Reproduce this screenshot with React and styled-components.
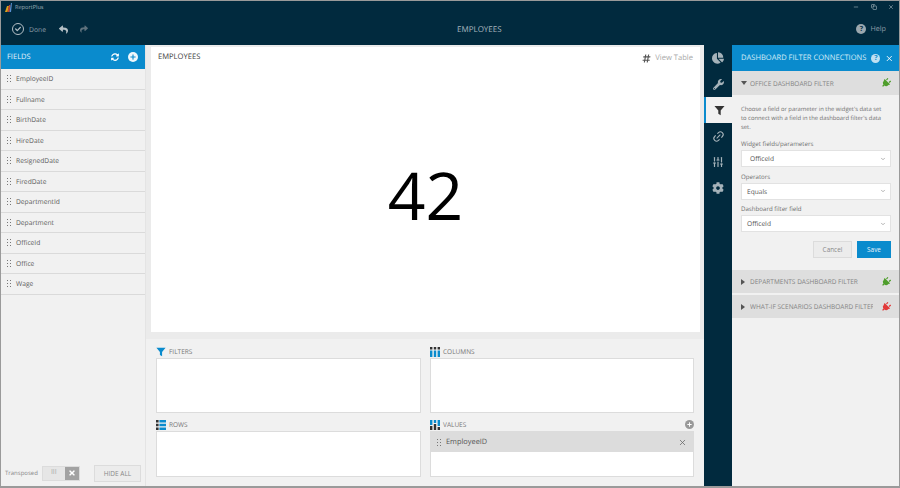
import React from "react";
import styled, { createGlobalStyle } from "styled-components";
import { FaReply, FaShare, FaPlug, FaChartPie, FaWrench, FaCog, FaCheck, FaTimes, FaPlus, FaHashtag, FaSyncAlt } from "react-icons/fa";
import { SlidersVertical, Link2, Minus, Copy, X, ChevronDown } from "lucide-react";

const GlobalStyle = createGlobalStyle`
  html, body {
    margin: 0;
    padding: 0;
    background: #fff;
  }
  * {
    box-sizing: border-box;
  }
`;

const DARK = "#012a3e";
const BLUE = "#0a8bcd";

const Window = styled.div`
  width: 900px;
  height: 488px;
  display: flex;
  flex-direction: column;
  border: 1px solid #9a9a9a;
  border-bottom-width: 2px;
  font-family: "Open Sans", sans-serif;
  text-rendering: geometricPrecision;
  color: #555;
  overflow: hidden;
  background: #f1f1f1;
`;

const TitleBar = styled.div`
  height: 12px;
  background: ${DARK};
  display: flex;
  align-items: center;
  padding: 0 4px;
  gap: 3px;
  color: #9fb0b9;
  font-size: 5.6px;
`;

const WinButtons = styled.div`
  margin-left: auto;
  display: flex;
  gap: 11.5px;
  padding-right: 1px;
  color: #c5d0d5;
`;

const Toolbar = styled.div`
  height: 32px;
  background: ${DARK};
  display: grid;
  grid-template-columns: 445px auto 1fr;
  align-items: center;
  padding: 0 11px;
  color: #8c9ca6;
  font-size: 6.8px;
`;

const ToolLeft = styled.div`
  display: flex;
  align-items: center;
  gap: 5px;
`;

const ToolTitle = styled.div`
  color: #a9b7bf;
  font-size: 8px;
`;

const CheckCircle = styled.span`
  width: 12px;
  height: 12px;
  border: 1px solid #b5c0c6;
  border-radius: 50%;
  display: flex;
  align-items: center;
  justify-content: center;
  color: #b5c0c6;
`;

const HelpWrap = styled.div`
  justify-self: end;
  display: flex;
  align-items: center;
  gap: 4px;
  padding-right: 2px;
  font-size: 7.2px;
`;

const RoundIcon = styled.span`
  width: ${(p) => p.$size || 9}px;
  height: ${(p) => p.$size || 9}px;
  border-radius: 50%;
  background: ${(p) => p.$bg || "#9aa7ae"};
  color: ${(p) => p.$fg || DARK};
  font-size: 7px;
  font-weight: 700;
  display: inline-flex;
  align-items: center;
  justify-content: center;
  flex: none;
`;

const Main = styled.div`
  flex: 1;
  display: flex;
  min-height: 0;
`;

const FieldsPane = styled.aside`
  width: 144px;
  display: flex;
  flex-direction: column;
  background: #f1f1f1;
`;

const BlueHeader = styled.div`
  height: 24px;
  background: ${BLUE};
  color: #e4f2fa;
  display: flex;
  align-items: center;
  font-size: 7.5px;
  padding: 0 7px 0 6px;
  gap: 9px;
  flex: none;
`;

const HeaderTitle = styled.span`
  flex: 1;
  white-space: nowrap;
`;

const FieldRow = styled.div`
  height: 20.5px;
  flex: none;
  display: flex;
  align-items: center;
  gap: 5px;
  padding-left: 5px;
  border-bottom: 1.5px solid #dadada;
  font-size: 6.7px;
  color: #5c5c5c;
`;

const Grip = styled.span`
  width: 5px;
  height: 9px;
  flex: none;
  background-image: radial-gradient(#777 0.7px, transparent 0.8px);
  background-size: 3px 3px;
`;

const PaneFoot = styled.div`
  margin-top: auto;
  height: 26px;
  display: flex;
  align-items: center;
  padding: 0 4px;
  font-size: 6px;
  color: #888;
`;

const Toggle = styled.div`
  margin-left: 4px;
  width: 38px;
  height: 15px;
  display: flex;
  background: #e6e6e6;
  border: 1px solid #dcdcdc;
`;

const ToggleBars = styled.span`
  flex: 1;
  text-align: center;
  line-height: 12px;
  font-size: 7px;
  color: #aaa;
`;

const ToggleX = styled.span`
  width: 14px;
  background: #a2a2a2;
  color: #fff;
  display: flex;
  align-items: center;
  justify-content: center;
`;

const HideAll = styled.button`
  margin-left: auto;
  width: 47px;
  height: 17px;
  background: #ececec;
  border: 1px solid #dcdcdc;
  font: inherit;
  font-size: 6.5px;
  color: #888;
  padding: 0;
`;

const Center = styled.main`
  flex: 1;
  min-width: 0;
  display: flex;
  flex-direction: column;
  background: #f1f1f1;
  border-left: 1px solid #e4e4e4;
`;

const CanvasBand = styled.div`
  height: 294px;
  padding: 2px 4px 7px 5px;
  background: #ebebeb;
  flex: none;
`;

const Card = styled.div`
  height: 100%;
  background: #fff;
  display: flex;
  flex-direction: column;
  padding: 4px 7px;
`;

const CardHead = styled.div`
  display: flex;
  align-items: center;
  justify-content: space-between;
  font-size: 7.6px;
  color: #444;
`;

const ViewTable = styled.span`
  display: flex;
  align-items: center;
  gap: 4px;
  color: #a8a8a8;
  padding-top: 2px;
`;

const BigNumber = styled.div`
  flex: 1;
  display: flex;
  align-items: center;
  justify-content: center;
  font-size: 66px;
  font-weight: 400;
  color: #000;
  padding-bottom: 2px;
  line-height: 1;
`;

const Shelves = styled.div`
  flex: 1;
  display: grid;
  grid-template-columns: 265px 264px;
  grid-template-rows: 68px 59px;
  column-gap: 9px;
  row-gap: 5px;
  padding: 6px 9px 0 10px;
`;

const Shelf = styled.section`
  display: flex;
  flex-direction: column;
  min-height: 0;
`;

const ShelfLabel = styled.div`
  display: flex;
  align-items: center;
  gap: 3px;
  font-size: 6.5px;
  color: #777;
  height: 13px;
  flex: none;
`;

const AddValue = styled.span`
  margin-left: auto;
`;

const ShelfBox = styled.div`
  flex: 1;
  background: #fff;
  border: 1px solid #dcdcdc;
`;

const Pill = styled.div`
  height: 20px;
  background: #dcdcdc;
  display: flex;
  align-items: center;
  gap: 5px;
  padding: 0 6px 0 5px;
  font-size: 7.4px;
  color: #555;
`;

const PillName = styled.span`
  flex: 1;
`;

const Rail = styled.nav`
  width: 28px;
  background: ${DARK};
  display: flex;
  flex-direction: column;
  flex: none;
`;

const RailItem = styled.div`
  height: 26px;
  display: flex;
  align-items: center;
  justify-content: center;
  color: ${(p) => (p.$active ? "#333" : "#a5b2b9")};
  background: ${(p) => (p.$active ? "#f1f1f1" : "transparent")};
  border-left: ${(p) => (p.$active ? `2px solid ${BLUE}` : "none")};
`;

const FilterPane = styled.aside`
  width: 167px;
  flex: none;
  display: flex;
  flex-direction: column;
  background: #f1f1f1;
`;

const PanelHeader = styled(BlueHeader)`
  height: 26px;
  font-size: 7.55px;
  color: #d7ecf7;
  padding: 0 5px 0 9px;
  gap: 5px;
`;

const Section = styled.div`
  height: ${(p) => p.$h || 23}px;
  flex: none;
  background: #dedede;
  display: flex;
  align-items: center;
  padding: 0 8px 0 9px;
  font-size: 6.5px;
  color: #848484;
  margin-top: ${(p) => p.$gap || 0}px;
  white-space: nowrap;
  overflow: hidden;
`;

const SectionName = styled.span`
  flex: 1;
  min-width: 0;
  margin-right: 8px;
  overflow: hidden;
`;

const Caret = styled.span`
  width: 0;
  height: 0;
  flex: none;
  border-style: solid;
  border-color: transparent;
  ${(p) =>
    p.$open
      ? "border-width: 4px 3px 0 3px; border-top-color: #555; margin-right: 3px;"
      : "border-width: 3px 0 3px 4px; border-left-color: #555; margin-right: 5px;"}
`;

const SectionBody = styled.div`
  padding: 9.5px 8px 12px 9px;
  display: flex;
  flex-direction: column;
  color: #6f6f6f;
`;

const Hint = styled.p`
  margin: 0;
  font-size: 5.85px;
  line-height: 9px;
  white-space: nowrap;
`;

const FieldLabel = styled.label`
  margin-top: ${(p) => p.$top || 4.5}px;
  margin-bottom: 1px;
  font-size: 6.15px;
  line-height: 10px;
`;

const SelectBox = styled.div`
  height: 17px;
  background: #fff;
  border: 1px solid #e2e2e2;
  display: flex;
  align-items: center;
  justify-content: space-between;
  padding: 0 4px 0 ${(p) => p.$pad || 5}px;
  font-size: 6.6px;
  color: #555;
`;

const Buttons = styled.div`
  display: flex;
  justify-content: flex-end;
  gap: 5px;
  margin-top: 9px;
`;

const FormButton = styled.button`
  height: 17px;
  width: ${(p) => (p.$primary ? 34 : 39)}px;
  padding: 0;
  border: 1px solid ${(p) => (p.$primary ? BLUE : "#dcdcdc")};
  background: ${(p) => (p.$primary ? BLUE : "#ececec")};
  color: ${(p) => (p.$primary ? "#e8f4fb" : "#888")};
  font: inherit;
  font-size: 6.4px;
`;

const FIELDS = ["EmployeeID", "Fullname", "BirthDate", "HireDate", "ResignedDate", "FiredDate", "DepartmentId", "Department", "OfficeId", "Office", "Wage"];

const Funnel = ({ size = 11, color = "currentColor" }) => (
  <svg width={size} height={size} viewBox="0 0 12 12">
    <path d="M0.5 1h11L7.3 6v5.2L4.7 9.6V6z" fill={color} />
  </svg>
);

const GridIcon = ({ kind }) => {
  // shelf glyphs: dark cells and blue cells
  if (kind === "rows") {
    return (
      <svg width="10" height="10" viewBox="0 0 10 10">
        <path d="M0 0h2.6v2.4H0zM0 3.8h2.6v2.4H0zM0 7.6h2.6V10H0z" fill="#333" />
        <path d="M3.4 0H10v2.4H3.4zM3.4 3.8H10v2.4H3.4zM3.4 7.6H10V10H3.4z" fill={BLUE} />
      </svg>
    );
  }
  if (kind === "columns") {
    return (
      <svg width="10" height="10" viewBox="0 0 10 10">
        <path d="M0 0h2.4v2.6H0zM3.8 0h2.4v2.6H3.8zM7.6 0H10v2.6H7.6z" fill="#333" />
        <path d="M0 3.4h2.4V10H0zM3.8 3.4h2.4V10H3.8zM7.6 3.4H10V10H7.6z" fill={BLUE} />
      </svg>
    );
  }
  return (
    <svg width="10" height="10" viewBox="0 0 10 10">
      <path d="M0 0h2.4v5H0zM3.8 0h2.4v3H3.8zM7.6 0H10v6H7.6z" fill={BLUE} />
      <path d="M0 6h2.4v4H0zM3.8 4h2.4v6H3.8zM7.6 7H10v3H7.6z" fill="#333" />
    </svg>
  );
};

const LogoMark = () => (
  <svg width="7" height="9" viewBox="0 0 7 9">
    <path d="M0 9L2 3h2L2.5 9z" fill="#d9a21b" />
    <path d="M2.5 9L4 2h1.5L4.5 9z" fill="#c8452f" />
    <path d="M4.5 9L6 0h1L6 9z" fill="#5a8fd0" />
  </svg>
);

const PlugMark = ({ bad }) => (
  <FaPlug size={10} color={bad ? "#e23a3a" : "#4f9e2c"} style={{ transform: "rotate(45deg)", flex: "none" }} />
);

export default function App() {
  return (
    <>
      <GlobalStyle />
      <Window>
        <TitleBar>
          <LogoMark />
          ReportPlus
          <WinButtons>
            <Minus size={6} />
            <Copy size={6} />
            <X size={6} />
          </WinButtons>
        </TitleBar>
        <Toolbar>
          <ToolLeft>
            <CheckCircle>
              <FaCheck size={6} />
            </CheckCircle>
            Done
            <FaReply size={9} color="#b5c0c6" style={{ marginLeft: 8 }} />
            <FaShare size={8} color="#5f727d" style={{ marginLeft: 7 }} />
          </ToolLeft>
          <ToolTitle>EMPLOYEES</ToolTitle>
          <HelpWrap>
            <RoundIcon $size={10}>?</RoundIcon>
            Help
          </HelpWrap>
        </Toolbar>
        <Main>
          <FieldsPane>
            <BlueHeader>
              <HeaderTitle>FIELDS</HeaderTitle>
              <FaSyncAlt size={8} color="#fff" />
              <RoundIcon $size={10} $bg="#eef7fc" $fg={BLUE}>
                <FaPlus size={6} />
              </RoundIcon>
            </BlueHeader>
            {FIELDS.map((f) => (
              <FieldRow key={f}>
                <Grip />
                {f}
              </FieldRow>
            ))}
            <PaneFoot>
              Transposed
              <Toggle>
                <ToggleBars>III</ToggleBars>
                <ToggleX>
                  <FaTimes size={8} />
                </ToggleX>
              </Toggle>
              <HideAll>HIDE ALL</HideAll>
            </PaneFoot>
          </FieldsPane>
          <Center>
            <CanvasBand>
              <Card>
                <CardHead>
                  EMPLOYEES
                  <ViewTable>
                    <FaHashtag size={9} color="#555" />
                    View Table
                  </ViewTable>
                </CardHead>
                <BigNumber>42</BigNumber>
              </Card>
            </CanvasBand>
            <Shelves>
              <Shelf>
                <ShelfLabel>
                  <Funnel size={10} color={BLUE} />
                  FILTERS
                </ShelfLabel>
                <ShelfBox />
              </Shelf>
              <Shelf>
                <ShelfLabel>
                  <GridIcon kind="columns" />
                  COLUMNS
                </ShelfLabel>
                <ShelfBox />
              </Shelf>
              <Shelf>
                <ShelfLabel>
                  <GridIcon kind="rows" />
                  ROWS
                </ShelfLabel>
                <ShelfBox />
              </Shelf>
              <Shelf>
                <ShelfLabel>
                  <GridIcon kind="values" />
                  VALUES
                  <AddValue>
                    <RoundIcon $size={9} $bg="#999" $fg="#fff">
                      <FaPlus size={5} />
                    </RoundIcon>
                  </AddValue>
                </ShelfLabel>
                <ShelfBox>
                  <Pill>
                    <Grip />
                    <PillName>EmployeeID</PillName>
                    <X size={9} color="#666" strokeWidth={2} />
                  </Pill>
                </ShelfBox>
              </Shelf>
            </Shelves>
          </Center>
          <Rail>
            <RailItem>
              <FaChartPie size={12} />
            </RailItem>
            <RailItem>
              <FaWrench size={11} />
            </RailItem>
            <RailItem $active>
              <Funnel size={11} />
            </RailItem>
            <RailItem>
              <Link2 size={13} strokeWidth={2} style={{ transform: "rotate(-45deg)" }} />
            </RailItem>
            <RailItem>
              <SlidersVertical size={12} strokeWidth={2.4} />
            </RailItem>
            <RailItem>
              <FaCog size={12} />
            </RailItem>
          </Rail>
          <FilterPane>
            <PanelHeader>
              <HeaderTitle>DASHBOARD FILTER CONNECTIONS</HeaderTitle>
              <RoundIcon $size={9} $bg="#bfe0f2" $fg={BLUE}>?</RoundIcon>
              <X size={9} strokeWidth={2.5} color="#fff" />
            </PanelHeader>
            <Section $h={24}>
              <Caret $open />
              <SectionName>OFFICE DASHBOARD FILTER</SectionName>
              <PlugMark />
            </Section>
            <SectionBody>
              <Hint>
                Choose a field or parameter in the widget's data set
                <br />
                to connect with a field in the dashboard filter's data
                <br />
                set.
              </Hint>
              <FieldLabel $top={7.5}>Widget fields/parameters</FieldLabel>
              <SelectBox $pad={8}>
                OfficeId
                <ChevronDown size={6} color="#999" strokeWidth={3} />
              </SelectBox>
              <FieldLabel>Operators</FieldLabel>
              <SelectBox>
                Equals
                <ChevronDown size={6} color="#999" strokeWidth={3} />
              </SelectBox>
              <FieldLabel>Dashboard filter field</FieldLabel>
              <SelectBox>
                OfficeId
                <ChevronDown size={6} color="#999" strokeWidth={3} />
              </SelectBox>
              <Buttons>
                <FormButton>Cancel</FormButton>
                <FormButton $primary>Save</FormButton>
              </Buttons>
            </SectionBody>
            <Section>
              <Caret />
              <SectionName>DEPARTMENTS DASHBOARD FILTER</SectionName>
              <PlugMark />
            </Section>
            <Section $gap={2}>
              <Caret />
              <SectionName>WHAT-IF SCENARIOS DASHBOARD FILTER</SectionName>
              <PlugMark bad />
            </Section>
          </FilterPane>
        </Main>
      </Window>
    </>
  );
}
